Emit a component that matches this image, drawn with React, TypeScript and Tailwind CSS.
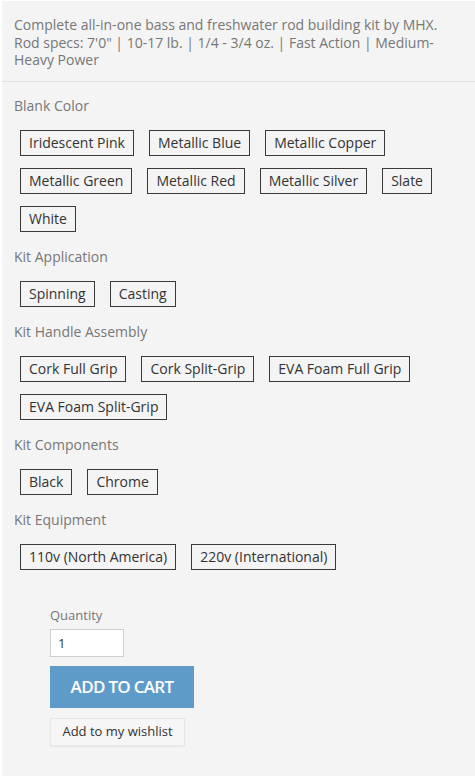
import React from 'react'

const groups: { label: string; options: string[] }[] = [
  {
    label: 'Blank Color',
    options: [
      'Iridescent Pink',
      'Metallic Blue',
      'Metallic Copper',
      'Metallic Green',
      'Metallic Red',
      'Metallic Silver',
      'Slate',
      'White',
    ],
  },
  { label: 'Kit Application', options: ['Spinning', 'Casting'] },
  {
    label: 'Kit Handle Assembly',
    options: ['Cork Full Grip', 'Cork Split-Grip', 'EVA Foam Full Grip', 'EVA Foam Split-Grip'],
  },
  { label: 'Kit Components', options: ['Black', 'Chrome'] },
  { label: 'Kit Equipment', options: ['110v (North America)', '220v (International)'] },
]

export default function App() {
  return (
    <div className="min-h-[776px] w-[475px] bg-white pt-[1px] pl-[2px] font-['Open_Sans',sans-serif]">
      <div className="min-h-[775px] bg-[#f4f4f4]">
        {/* description */}
        <div className="border-b border-[#e2e2e2] pt-[15px] pr-[20px] pb-[12px] pl-[12px]">
          <p className="text-[14px] leading-[17.5px] text-[#777]">
            Complete all-in-one bass and freshwater rod building kit by MHX. Rod specs: 7'0" | 10-17 lb. | 1/4 - 3/4 oz. | Fast Action | Medium-Heavy Power
          </p>
        </div>

        {/* options */}
        <div className="pt-[14px] pl-[12px] pr-[10px]">
          {groups.map(g => (
            <div key={g.label} className="mb-[15px]">
              <p className="text-[14px] leading-[20px] text-[#777]">{g.label}</p>
              <div className="mt-[14px] flex flex-wrap gap-x-[15px] gap-y-[12px] pl-[6px]">
                {g.options.map(o => (
                  <button
                    key={o}
                    className="flex h-[26px] items-center border border-[#3a3a3a] px-[8px] text-[14px] text-[#333]"
                  >
                    {o}
                  </button>
                ))}
              </div>
            </div>
          ))}
        </div>

        {/* add to cart */}
        <div className="pl-[48px] pt-[21px]">
          <p className="text-[13px] leading-[18px] text-[#777]">Quantity</p>
          <input
            defaultValue="1"
            className="mt-[5px] block h-[28px] w-[74px] border border-[#cfcfcf] bg-white px-[7px] text-[13px] text-[#333] outline-none"
          />
          <button className="mt-[9px] flex h-[42px] w-[144px] items-center justify-center bg-[#5f9bc9] text-[17px] font-semibold tracking-[-0.7px] text-white">
            ADD TO CART
          </button>
          <button className="mt-[10px] flex h-[28px] w-[135px] items-center justify-center border border-[#e6e6e6] bg-[#f6f6f6] text-[13px] text-[#333] shadow-[0_1px_2px_rgba(0,0,0,0.05)]">
            Add to my wishlist
          </button>
        </div>
      </div>
    </div>
  )
}
